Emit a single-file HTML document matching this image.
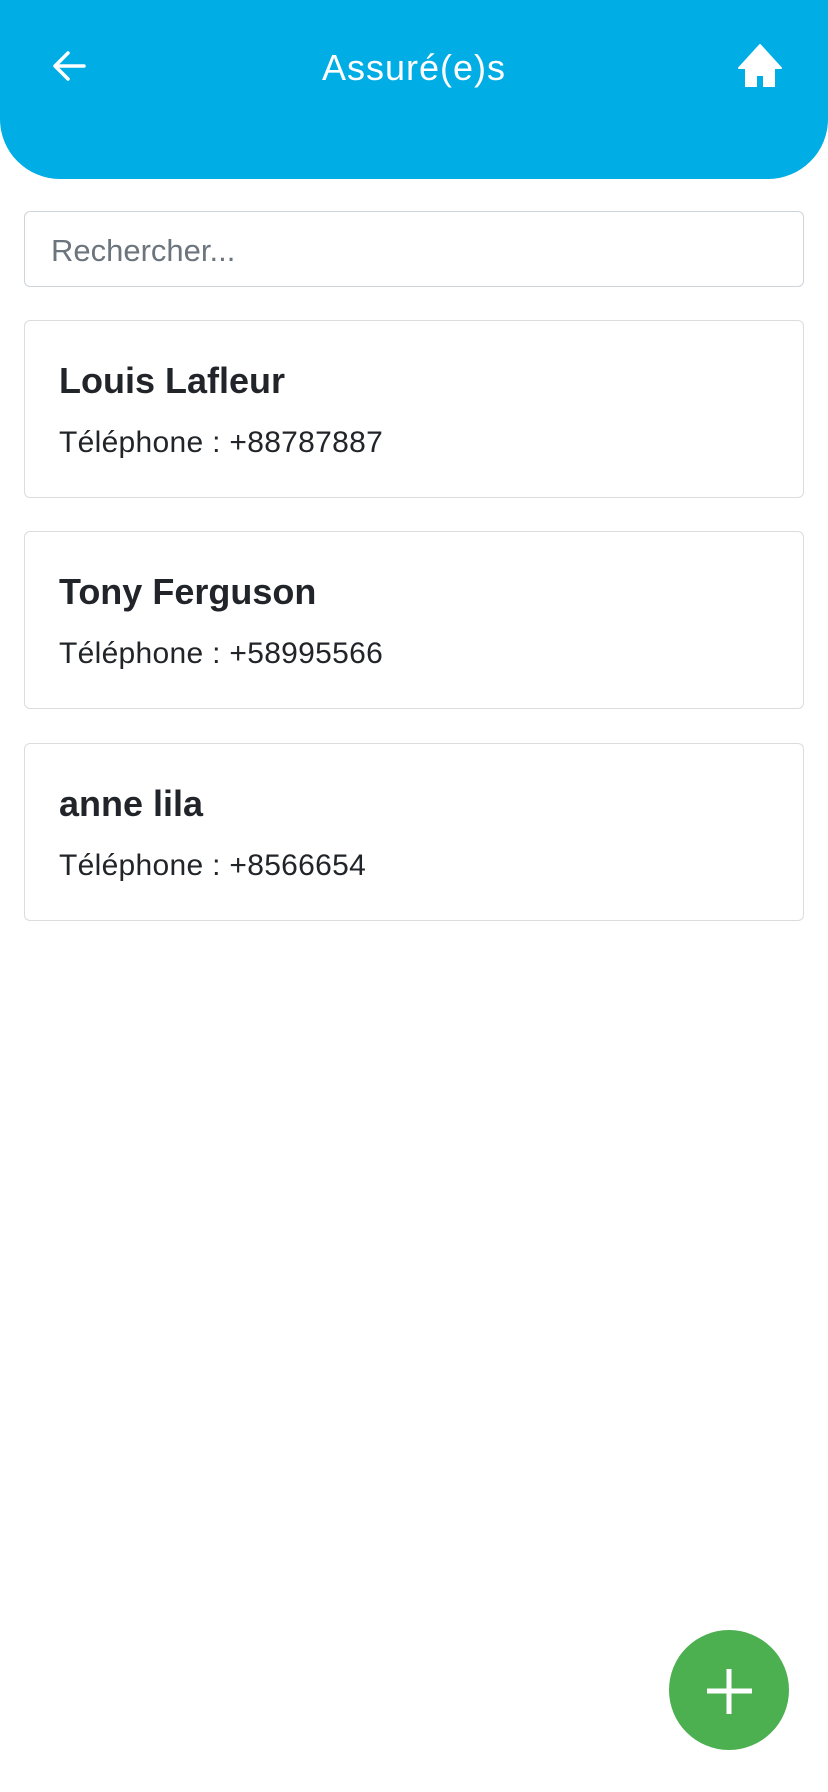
<!DOCTYPE html>
<html><head><meta charset="utf-8"><style>
body{margin:0;width:828px;height:1792px;background:#fff;font-family:"Liberation Sans",sans-serif;position:relative;overflow:hidden}
.hdr{position:absolute;left:0;top:0;width:828px;height:179px;background:#00ade4;border-radius:0 0 60px 60px}
.title{position:absolute;top:47px;left:0;width:828px;text-align:center;color:#fff;font-size:36px;letter-spacing:1px}
.search{position:absolute;left:24px;top:211px;width:780px;height:76px;border:1.5px solid #ced4da;border-radius:6px;box-sizing:border-box}
.search span{position:absolute;left:26px;top:21px;font-size:31px;color:#6c757d}
.card{position:absolute;left:24px;width:780px;height:178px;border:1.5px solid #dcdcdc;border-radius:6px;box-sizing:border-box;color:#212529}
.card b{position:absolute;left:34px;top:39px;font-size:36px}
.card i{position:absolute;left:34px;top:105px;font-size:30px;font-style:normal;letter-spacing:.3px}
.fab{position:absolute;left:669px;top:1630px;width:120px;height:120px;border-radius:50%;background:#4caf50}
</style></head><body>
<div class="hdr"></div>
<svg style="position:absolute;left:50px;top:48px" width="38" height="36" viewBox="0 0 38 36"><path d="M34 18H6M18 5L5 18l13 13" stroke="#fff" stroke-width="3.5" fill="none" stroke-linecap="round" stroke-linejoin="round"/></svg>
<div class="title">Assuré(e)s</div>
<svg style="position:absolute;left:737px;top:43px" width="46" height="44" viewBox="0 0 46 44"><path d="M23 2L2 25h7v19h10V32h8v12h10V25h7z" fill="#fff" stroke="#fff" stroke-width="2" stroke-linejoin="round"/></svg>
<div class="search"><span>Rechercher...</span></div>
<div class="card" style="top:320px"><b>Louis Lafleur</b><i>Téléphone : +88787887</i></div>
<div class="card" style="top:531px"><b>Tony Ferguson</b><i>Téléphone : +58995566</i></div>
<div class="card" style="top:743px"><b>anne lila</b><i>Téléphone : +8566654</i></div>
<div class="fab"><svg width="120" height="120" viewBox="0 0 120 120"><path d="M60 39v45M38 61h45" stroke="#fff" stroke-width="5"/></svg></div>
</body></html>
